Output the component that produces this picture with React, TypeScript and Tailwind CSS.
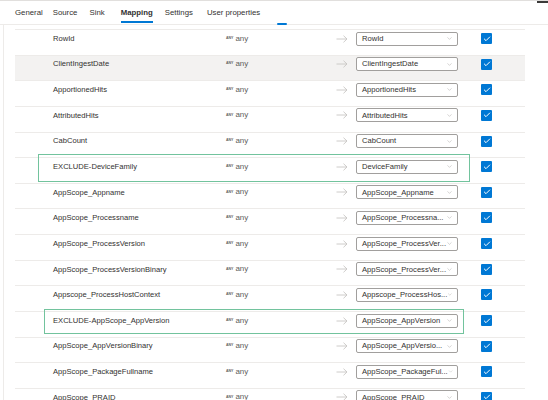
import { Check, ChevronDown } from 'lucide-react';

// Copy activity "Mapping" tab - column mapping list

const rows: { name: string; target: string; hover?: boolean; box?: 'a' | 'b' }[] = [
  { name: 'RowId', target: 'RowId' },
  { name: 'ClientIngestDate', target: 'ClientIngestDate', hover: true },
  { name: 'ApportionedHits', target: 'ApportionedHits' },
  { name: 'AttributedHits', target: 'AttributedHits' },
  { name: 'CabCount', target: 'CabCount' },
  { name: 'EXCLUDE-DeviceFamily', target: 'DeviceFamily', box: 'a' },
  { name: 'AppScope_Appname', target: 'AppScope_Appname' },
  { name: 'AppScope_Processname', target: 'AppScope_Processna...' },
  { name: 'AppScope_ProcessVersion', target: 'AppScope_ProcessVer...' },
  { name: 'AppScope_ProcessVersionBinary', target: 'AppScope_ProcessVer...' },
  { name: 'Appscope_ProcessHostContext', target: 'Appscope_ProcessHos...' },
  { name: 'EXCLUDE-AppScope_AppVersion', target: 'AppScope_AppVersion', box: 'b' },
  { name: 'AppScope_AppVersionBinary', target: 'AppScope_AppVersio...' },
  { name: 'AppScope_PackageFullname', target: 'AppScope_PackageFul...' },
  { name: 'AppScope_PRAID', target: 'AppScope_PRAID' },
];

const tabs = [
  { label: 'General', ml: 'ml-0' },
  { label: 'Source', ml: 'ml-[10px]' },
  { label: 'Sink', ml: 'ml-[12px]' },
  { label: 'Mapping', ml: 'ml-[16px]' },
  { label: 'Settings', ml: 'ml-[12px]' },
  { label: 'User properties', ml: 'ml-[14px]' },
];

function MappingRow({ name, target, hover, box }: (typeof rows)[number]) {
  return (
    <div className={`relative h-[25.65px] border-b border-[#edebe9] ${hover ? 'bg-[#f3f2f1]' : ''}`}>
      {/* Annotation outline */}
      {box === 'a' && (
        <div className="absolute left-[23px] top-[-4px] w-[432px] h-[28px] border border-[#72c39d] pointer-events-none" />
      )}
      {box === 'b' && (
        <div className="absolute left-[29px] top-[-3px] w-[420px] h-[25px] border border-[#72c39d] pointer-events-none" />
      )}
      <div className="flex items-center h-[17px]">
        <div className="w-[211px] pl-[38px] text-[#323130] whitespace-nowrap">{name}</div>
        <div className="w-[110px] flex items-center">
          <span className="text-[3.5px] font-bold text-[#605e5c] mr-[2px] leading-none">ANY</span>
          <span className="text-[#605e5c] text-[8px]">any</span>
        </div>
        <div className="w-[20px] flex items-center">
          <svg width="12" height="8" viewBox="0 0 12 8" fill="none" stroke="#c8c6c4" strokeWidth="0.9">
            <path d="M0.5 4H11" />
            <path d="M7.5 0.7L11 4L7.5 7.3" />
          </svg>
        </div>
        <div className="w-[102px] h-[14px] border border-[#a19f9d] rounded-[2px] flex items-center justify-between pl-[5px] pr-[4px] bg-white">
          <span className="text-[#323130] whitespace-nowrap">{target}</span>
          <ChevronDown size={7} className="text-[#a19f9d]" strokeWidth={1.5} />
        </div>
        <div className="ml-[23px] w-[11px] h-[11px] rounded-[1px] bg-[#0078d4] flex items-center justify-center">
          <Check size={8} strokeWidth={3} className="text-white" />
        </div>
      </div>
    </div>
  );
}

export default function App() {
  return (
    <div
      className="relative w-[548px] h-[400px] overflow-hidden bg-white border-t border-[#e1dfdd] text-[7.6px]"
      style={{ fontFamily: '"Segoe UI", "Liberation Sans", Arial, sans-serif' }}
    >
      <div className="absolute right-0 top-[-1px] w-[11px] h-[3px] bg-[#3b3a39]" />

      {/* Tabs */}
      <div className="relative h-[24px] border-b border-[#edebe9] flex items-stretch pl-[15px]">
        {tabs.map((t) => (
          <div
            key={t.label}
            className={`relative flex items-center text-[7.8px] text-[#323130] ${t.ml} ${
              t.label === 'Mapping' ? 'font-bold' : ''
            }`}
          >
            {t.label}
            {t.label === 'Mapping' && (
              <div className="absolute left-0 right-0 bottom-[1px] h-[2px] bg-[#0078d4]" />
            )}
          </div>
        ))}
        <div className="absolute left-[277px] bottom-[-1px] w-[10px] h-[2px] bg-[#0078d4] rounded-full" />
      </div>

      {/* Mapping list */}
      <div className="ml-[3px] border-l border-[#edebe9] pl-[11px] pt-[4px] h-[380px]">
        <div className="w-[510px] border-t border-[#edebe9]">
          {rows.map((r, i) => (
            <MappingRow key={i} {...r} />
          ))}
        </div>
      </div>
    </div>
  );
}
